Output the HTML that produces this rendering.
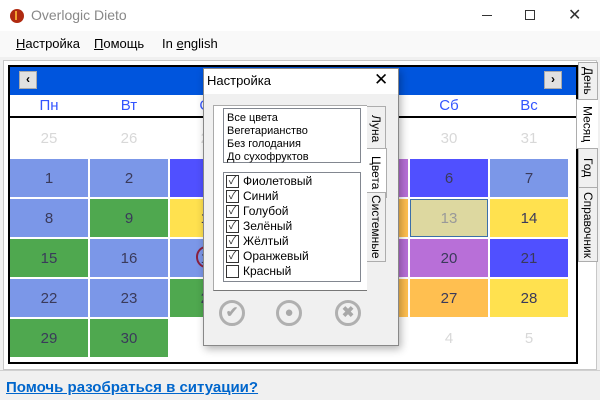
<!DOCTYPE html>
<html><head><meta charset="utf-8"><style>
*{margin:0;padding:0;box-sizing:border-box}
body{width:600px;height:400px;overflow:hidden;background:#f0f0f0;font-family:"Liberation Sans","Noto Sans CJK SC",sans-serif;position:relative;font-size:12px;color:#000}
.a{position:absolute}
.cell{position:absolute;width:78px;height:38px;display:flex;align-items:center;justify-content:center;font-size:15px;color:#3a3a5a}
.g{color:#d8d8d8}
.vt{position:absolute;writing-mode:vertical-rl;display:flex;align-items:center;justify-content:center;font-size:12px;border:1px solid #adadad;background:#f0f0f0}
</style></head><body>
<div class="a" style="left:0;top:0;width:600px;height:31px;background:#fff"></div>
<div class="a" style="left:10px;top:9px;width:14px;height:14px;border-radius:50%;background:#b02a10"></div>
<div class="a" style="left:15px;top:11px;width:4px;height:9px;border-left:2px solid #f0a030"></div>
<div class="a" style="left:31px;top:7px;font-size:14px;color:#888">Overlogic Dieto</div>
<div class="a" style="left:482px;top:15px;width:10px;height:1px;background:#333"></div>
<div class="a" style="left:525px;top:10px;width:10px;height:10px;border:1px solid #333"></div>
<div class="a" style="left:568px;top:5px;font-size:16px;color:#333">✕</div>
<div class="a" style="left:0;top:31px;width:600px;height:26px;background:#f9f9f9"></div>
<div class="a" style="left:16px;top:36px;font-size:13px"><u>Н</u>астройка</div>
<div class="a" style="left:94px;top:36px;font-size:13px"><u>П</u>омощь</div>
<div class="a" style="left:162px;top:36px;font-size:13px">In <u>e</u>nglish</div>
<div class="a" style="left:3px;top:60px;width:594px;height:310px;border:1px solid #c8c8c8;background:#fff"></div>
<div class="a" style="left:8px;top:65px;width:570px;height:299px;border:2px solid #000;background:#fff"></div>
<div class="a" style="left:10px;top:67px;width:566px;height:28px;background:#0055dd"></div>
<div class="a" style="left:19px;top:71px;width:18px;height:18px;background:#e1e1e1;border:1px solid #aaa;font-size:12px;font-weight:bold;text-align:center;line-height:15px">‹</div>
<div class="a" style="left:544px;top:71px;width:18px;height:18px;background:#e1e1e1;border:1px solid #aaa;font-size:12px;font-weight:bold;text-align:center;line-height:15px">›</div>
<div class="a" style="left:10px;top:116px;width:566px;height:2px;background:#000"></div>
<div id="days"></div>
<div id="cal"></div>
<div class="a" style="left:196px;top:246px;width:20px;height:22px;border:2px solid #8a2040;border-radius:50%"></div>
<div class="vt" style="left:578px;top:62px;width:20px;height:38px">День</div>
<div class="vt" style="left:576px;top:99px;width:22px;height:50px;background:#fff;border-right:none">Месяц</div>
<div class="vt" style="left:578px;top:148px;width:20px;height:40px">Год</div>
<div class="vt" style="left:578px;top:187px;width:20px;height:75px">Справочник</div>
<div class="a" style="left:0;top:370px;width:600px;height:1px;background:#d0d0d0"></div>
<div class="a" style="left:6px;top:379px;font-size:15px;font-weight:bold;color:#0066cc;text-decoration:underline">Помочь разобраться в ситуации?</div>
<!-- dialog -->
<div class="a" style="left:203px;top:68px;width:196px;height:278px;background:#f0f0f0;border:1px solid #888;box-shadow:2px 3px 8px rgba(0,0,0,.3)"></div>
<div class="a" style="left:204px;top:69px;width:194px;height:25px;background:#fff"></div>
<div class="a" style="left:207px;top:73px;font-size:13px">Настройка</div>
<div class="a" style="left:374px;top:70px;font-size:17px">✕</div>
<div class="vt" style="left:366px;top:106px;width:20px;height:45px;background:#f0f0f0">Луна</div>
<div class="vt" style="left:366px;top:148px;width:21px;height:50px;background:#fff;border-left:none">Цвета</div>
<div class="vt" style="left:366px;top:192px;width:20px;height:70px">Системные</div>
<div class="a" style="left:213px;top:105px;width:154px;height:186px;background:#fff;border:1px solid #aaa;border-right:none;border-bottom-color:#777"></div>
<div class="a" style="left:223px;top:108px;width:138px;height:55px;border:1px solid #828790;padding:3px 0 0 3px;font-size:11px;line-height:13px">Все цвета<br>Вегетарианство<br>Без голодания<br>До сухофруктов</div>
<div class="a" style="left:223px;top:172px;width:138px;height:110px;border:1px solid #828790"></div>
<div id="chk"></div>
<div id="btns"></div>
<script>
var h='';['Пн','Вт','Ср','Чт','Пт','Сб','Вс'].forEach(function(d,i){h+='<div class="a" style="left:'+(10+80*i)+'px;top:97px;width:78px;text-align:center;font-size:15px;color:#3355ff">'+d+'</div>'});
document.getElementById('days').innerHTML=h;
var C={l:'#7b97e8',g:'#4fa84f',b:'#5050ff',y:'#ffe14f',p:'#b86fd8',o:'#ffbf50',t:'#ddd8a0',w:'#fff'};
var rows=[[[25,'w'],[26,'w'],[27,'w'],[28,'w'],[29,'w'],[30,'w'],[31,'w']],
[[1,'l'],[2,'l'],[3,'b'],[4,'p'],[5,'p'],[6,'b'],[7,'l']],
[[8,'l'],[9,'g'],[10,'y'],[11,'o'],[12,'o'],[13,'t'],[14,'y']],
[[15,'g'],[16,'l'],[17,'l'],[18,'p'],[19,'p'],[20,'p'],[21,'b']],
[[22,'l'],[23,'l'],[24,'g'],[25,'o'],[26,'o'],[27,'o'],[28,'y']],
[[29,'g'],[30,'g'],[1,'w'],[2,'w'],[3,'w'],[4,'w'],[5,'w']]];
h='';rows.forEach(function(r,j){r.forEach(function(c,i){var y=j==0?119:159+40*(j-1);var ex=c[1]=='t'?'border:1px solid #3c6fa8;color:#999;':'';h+='<div class="cell'+(c[1]=='w'?' g':'')+'" style="left:'+(10+80*i)+'px;top:'+y+'px;background:'+C[c[1]]+';'+ex+'">'+c[0]+'</div>'})});
document.getElementById('cal').innerHTML=h;
h='';['Фиолетовый','Синий','Голубой','Зелёный','Жёлтый','Оранжевый','Красный'].forEach(function(n,i){var y=175+15*i;h+='<div class="a" style="left:226px;top:'+y+'px;width:13px;height:13px;border:1px solid #333;background:#fff;font-size:11px;line-height:11px;text-align:center;color:#333">'+(i<6?'✓':'')+'</div><div class="a" style="left:243px;top:'+(y-1)+'px;font-size:12px">'+n+'</div>'});
document.getElementById('chk').innerHTML=h;
h='';[[232,'✔'],[289,'●'],[348,'✖']].forEach(function(b){h+='<div class="a" style="left:'+(b[0]-13)+'px;top:300px;width:26px;height:26px;border:3px solid #b0b0b0;border-radius:50%;color:#a8a8a8;font-size:15px;font-weight:bold;text-align:center;line-height:20px">'+b[1]+'</div>'});
document.getElementById('btns').innerHTML=h;
</script>
</body></html>
